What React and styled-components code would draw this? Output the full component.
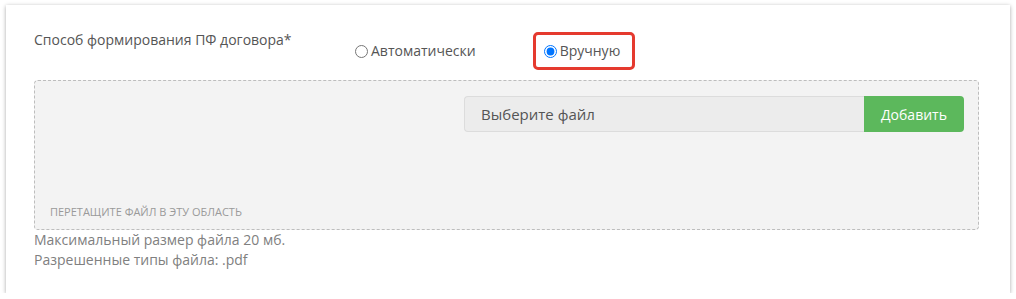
import React from "react";
import styled, { createGlobalStyle } from "styled-components";

const Global = createGlobalStyle`
  html, body { margin: 0; padding: 0; background: #ffffff; }
  body { font-family: "Open Sans", "Liberation Sans", sans-serif; }
  * { box-sizing: border-box; }
`;

const Card = styled.div`
  margin: 5px 0 0 6px;
  width: 1004px;
  height: 288px;
  padding: 25px 31px 23px 28px;
  background: #fff;
  box-shadow: 0 1px 4px rgba(0, 0, 0, 0.35);
`;

const FieldRow = styled.div`
  display: flex;
  align-items: flex-start;
  height: 50px;
`;

const FieldLabel = styled.div`
  width: 321px;
  font-size: 14px;
  line-height: 20px;
  color: #555;
`;

const RadioGroup = styled.div`
  display: flex;
  align-items: center;
  gap: 57px;
  margin-top: 2px;
`;

const Option = styled.label`
  display: inline-flex;
  align-items: center;
  gap: 3px;
  font-size: 14px;
  line-height: 20px;
  color: #555;
  cursor: pointer;
  ${(p) =>
    p.$highlight &&
    `
    border: 3px solid #e53a2f;
    border-radius: 5px;
    padding: 6px 12px 6px 8px;
  `}
`;

const Radio = styled.input.attrs({ type: "radio" })`
  width: 13px;
  height: 13px;
  margin: 0;
`;

const DropZone = styled.div`
  height: 150px;
  border: 1px dashed #bdbdbd;
  border-radius: 4px;
  background: #f3f3f3;
  padding: 15px 14px 10px 15px;
  display: flex;
  flex-direction: column;
`;

const FileRow = styled.div`
  display: flex;
  justify-content: flex-end;
`;

const FileInput = styled.div`
  width: 400px;
  height: 36px;
  display: flex;
  align-items: center;
  padding-left: 16px;
  background: #ececec;
  border: 1px solid #dcdcdc;
  border-right: none;
  border-radius: 4px 0 0 4px;
  font-size: 15px;
  color: #555;
`;

const AddButton = styled.button`
  width: 100px;
  height: 36px;
  border: none;
  border-radius: 0 4px 4px 0;
  background: #5cb85c;
  color: #fff;
  font-family: inherit;
  font-size: 14px;
  padding: 0;
  cursor: pointer;
`;

const DropHint = styled.div`
  margin-top: auto;
  font-size: 11px;
  line-height: 15px;
  text-transform: uppercase;
  color: #9a9a9a;
`;

const Help = styled.div`
  font-size: 14px;
  line-height: 20px;
  color: #808080;
`;

export default function App() {
  return (
    <>
      <Global />
      <Card>
        <FieldRow>
          <FieldLabel>Способ формирования ПФ договора*</FieldLabel>
          <RadioGroup>
            <Option>
              <Radio name="mode" />
              Автоматически
            </Option>
            <Option $highlight>
              <Radio name="mode" defaultChecked />
              Вручную
            </Option>
          </RadioGroup>
        </FieldRow>
        <DropZone>
          <FileRow>
            <FileInput>Выберите файл</FileInput>
            <AddButton>Добавить</AddButton>
          </FileRow>
          <DropHint>Перетащите файл в эту область</DropHint>
        </DropZone>
        <Help>
          Максимальный размер файла 20 мб.
          <br />
          Разрешенные типы файла: .pdf
        </Help>
      </Card>
    </>
  );
}
